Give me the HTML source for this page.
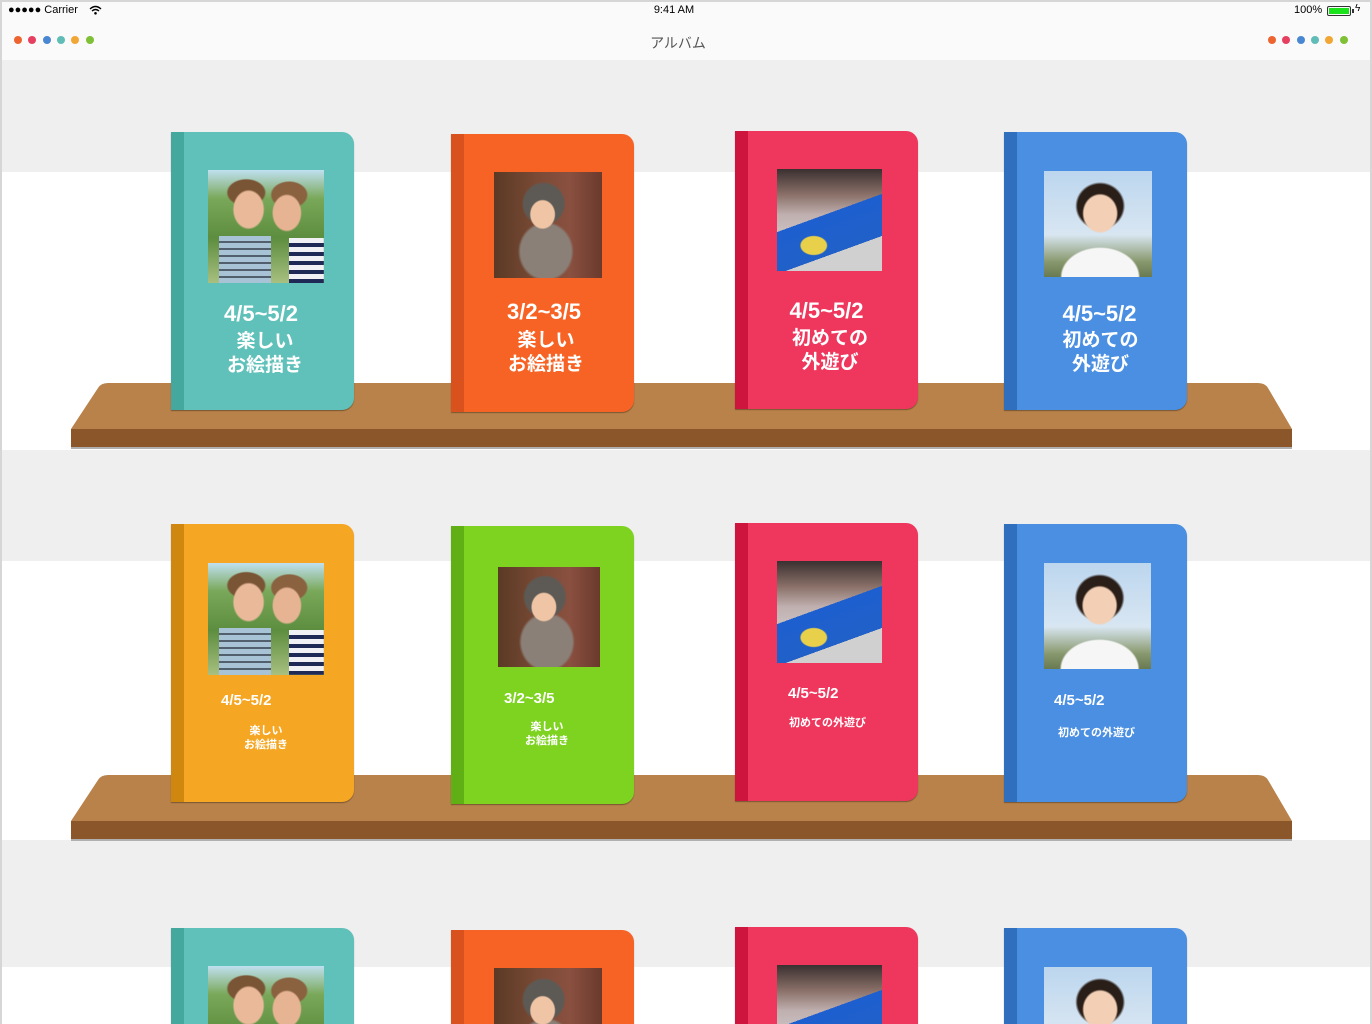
<!DOCTYPE html>
<html style="width:1372px;height:1024px;overflow:hidden"><head><meta charset="utf-8">
<style>
*{margin:0;padding:0;box-sizing:border-box}
html,body{width:1372px;height:1024px;overflow:hidden}
body{position:relative;background:#fff;font-family:"Liberation Sans","Noto Sans CJK JP",sans-serif}
.abs{position:absolute}
.frame{position:absolute;left:0;top:0;width:1372px;height:1024px;border:2px solid #d6d6d6;border-bottom:none;pointer-events:none;z-index:50}
.stripe{position:absolute;left:0;width:1372px;background:#efefef}
.book{position:absolute;width:183px;height:278px;border-radius:0 12px 12px 0;box-shadow:0 1px 1px rgba(0,0,0,.35);overflow:hidden;color:#fff;z-index:5}
.book .sp{position:absolute;left:0;top:0;width:13px;height:100%}
.ph{position:absolute}
.t{position:absolute;font-weight:bold;white-space:nowrap}
.teal{background:#60c1ba}.teal .sp{background:#45a89f}
.org{background:#f76325}.org .sp{background:#d9511c}
.red{background:#ef375d}.red .sp{background:#cd153d}
.blue{background:#4a8fe2}.blue .sp{background:#2f6fbd}
.yel{background:#f5a623}.yel .sp{background:#cf8710}
.grn{background:#7ed321}.grn .sp{background:#60b015}
.p1{background:
 radial-gradient(ellipse 16px 20px at 35% 35%,#e9b99a 90%,transparent 100%),
 radial-gradient(ellipse 15px 19px at 68% 38%,#e6b393 90%,transparent 100%),
 radial-gradient(ellipse 20px 14px at 33% 20%,#7a5535 90%,transparent 100%),
 radial-gradient(ellipse 19px 14px at 70% 22%,#8a6240 90%,transparent 100%),
 repeating-linear-gradient(180deg,#a8c3d6 0 5px,#52606e 5px 7px) 18% 100%/45% 42% no-repeat,
 repeating-linear-gradient(180deg,#f0f0f5 0 5px,#1e2a55 5px 9px) 100% 100%/30% 40% no-repeat,
 linear-gradient(180deg,#bfe0f0 0,#7aa85a 25%,#5d8d3e 60%,#a8c080 100%)}
.p2{background:
 radial-gradient(ellipse 13px 15px at 45% 40%,#f0c5a5 90%,transparent 100%),
 radial-gradient(ellipse 22px 22px at 46% 30%,#5d5a55 90%,transparent 100%),
 radial-gradient(ellipse 28px 30px at 48% 75%,#8a8078 90%,transparent 100%),
 linear-gradient(90deg,#5a3a25 0,#7a4a35 40%,#8a5040 70%,#6a3a2c 100%)}
.p3{background:
 radial-gradient(ellipse 14px 10px at 35% 75%,#e8d04a 90%,transparent 100%),
 linear-gradient(160deg,transparent 45%,#1e5fd0 45%,#2060c8 75%,#d0d0d0 75%),
 linear-gradient(180deg,#3a3030 0,#8a7068 25%,#c0b0b0 45%,#e0e0e0 100%)}
.p4{background:
 radial-gradient(ellipse 18px 20px at 52% 40%,#f2cfb5 90%,transparent 100%),
 radial-gradient(ellipse 25px 24px at 52% 33%,#2a1e18 90%,transparent 100%),
 radial-gradient(ellipse 40px 30px at 52% 100%,#f6f6f6 95%,transparent 100%),
 linear-gradient(180deg,#bcd6ee 0,#d8e6f2 60%,#8a9a70 85%,#6a7a50 100%)}
.clip{position:absolute;overflow:hidden}
.dot{position:absolute;width:8px;height:8px;border-radius:50%;top:36px}
</style></head><body>
<div class="frame"></div>
<div class="abs" style="left:0;top:0;width:1372px;height:60px;background:#fafafa"></div>
<div class="abs" style="left:8px;top:4px;font-size:11px;color:#000">●●●●● Carrier</div>
<svg class="abs" style="left:89px;top:5px" width="13" height="10" viewBox="0 0 13 10"><path d="M1 4 Q6.5 -1 12 4 M3 6 Q6.5 3 10 6" stroke="#000" stroke-width="1.4" fill="none"/><circle cx="6.5" cy="8.3" r="1.3"/></svg>
<div class="abs" style="left:0;width:1348px;top:4px;text-align:center;font-size:11px">9:41 AM</div>
<div class="abs" style="left:1294px;top:4px;font-size:11px">100%</div>
<div class="abs" style="left:1327px;top:6px;width:24px;height:10px;border:1px solid #333;border-radius:2px;padding:1px"><div style="width:100%;height:100%;background:#1be31b"></div></div>
<div class="abs" style="left:1352px;top:9px;width:2px;height:4px;background:#333"></div>
<div class="abs" style="left:1355px;top:3px;font-size:10px">ϟ</div>
<div class="abs" style="left:0;width:1356px;top:33px;text-align:center;font-size:14px;color:#555">アルバム</div>
<div class="dot" style="left:14px;background:#ee6430"></div><div class="dot" style="left:28px;background:#e73f5f"></div><div class="dot" style="left:43px;background:#4a87d3"></div><div class="dot" style="left:57px;background:#5fbcb6"></div><div class="dot" style="left:71px;background:#f2a634"></div><div class="dot" style="left:86px;background:#7fc035"></div>
<div class="dot" style="left:1268px;background:#ee6430"></div><div class="dot" style="left:1282px;background:#e73f5f"></div><div class="dot" style="left:1297px;background:#4a87d3"></div><div class="dot" style="left:1311px;background:#5fbcb6"></div><div class="dot" style="left:1325px;background:#f2a634"></div><div class="dot" style="left:1340px;background:#7fc035"></div>
<div class="stripe" style="top:60px;height:112px"></div>
<div class="stripe" style="top:450px;height:111px"></div>
<div class="stripe" style="top:840px;height:127px"></div>
<svg class="abs" style="left:0;top:370px;z-index:2" width="1372" height="90"><path d="M71 59 L98 18 Q101 13 108 13 L1258 13 Q1265 13 1268 18 L1292 59 Z" fill="#b8824a"/><rect x="71" y="59" width="1221" height="18" fill="#8b572a"/><rect x="71" y="77" width="1221" height="2" fill="#b0b0b0"/></svg>
<svg class="abs" style="left:0;top:762px;z-index:2" width="1372" height="90"><path d="M71 59 L98 18 Q101 13 108 13 L1258 13 Q1265 13 1268 18 L1292 59 Z" fill="#b8824a"/><rect x="71" y="59" width="1221" height="18" fill="#8b572a"/><rect x="71" y="77" width="1221" height="2" fill="#b0b0b0"/></svg>

<div class="book teal" style="left:171px;top:132px"><div class="sp"></div><div class="ph p1" style="left:37px;top:38px;width:116px;height:113px"></div>
<div class="t" style="left:0;width:180px;text-align:center;top:169px;font-size:22px">4/5~5/2</div>
<div class="t" style="left:0;width:188px;text-align:center;top:198px;font-size:19px;line-height:24px">楽しい<br>お絵描き</div></div>
<div class="book org" style="left:451px;top:134px"><div class="sp"></div><div class="ph p2" style="left:43px;top:38px;width:108px;height:106px"></div>
<div class="t" style="left:0;width:186px;text-align:center;top:165px;font-size:22px">3/2~3/5</div>
<div class="t" style="left:0;width:190px;text-align:center;top:195px;font-size:19px;line-height:24px">楽しい<br>お絵描き</div></div>
<div class="book red" style="left:735px;top:131px"><div class="sp"></div><div class="ph p3" style="left:42px;top:38px;width:105px;height:102px"></div>
<div class="t" style="left:0;width:183px;text-align:center;top:167px;font-size:22px">4/5~5/2</div>
<div class="t" style="left:0;width:190px;text-align:center;top:196px;font-size:19px;line-height:24px">初めての<br>外遊び</div></div>
<div class="book blue" style="left:1004px;top:132px"><div class="sp"></div><div class="ph p4" style="left:40px;top:39px;width:108px;height:106px"></div>
<div class="t" style="left:0;width:191px;text-align:center;top:169px;font-size:22px">4/5~5/2</div>
<div class="t" style="left:0;width:193px;text-align:center;top:197px;font-size:19px;line-height:24px">初めての<br>外遊び</div></div>

<div class="book yel" style="left:171px;top:524px"><div class="sp"></div><div class="ph p1" style="left:37px;top:39px;width:116px;height:112px"></div>
<div class="t" style="left:50px;top:168px;font-size:15px">4/5~5/2</div>
<div class="t" style="left:13px;width:164px;text-align:center;top:200px;font-size:11px;line-height:14px">楽しい<br>お絵描き</div></div>
<div class="book grn" style="left:451px;top:526px"><div class="sp"></div><div class="ph p2" style="left:47px;top:41px;width:102px;height:100px"></div>
<div class="t" style="left:53px;top:164px;font-size:15px">3/2~3/5</div>
<div class="t" style="left:13px;width:166px;text-align:center;top:194px;font-size:11px;line-height:14px">楽しい<br>お絵描き</div></div>
<div class="book red" style="left:735px;top:523px"><div class="sp"></div><div class="ph p3" style="left:42px;top:38px;width:105px;height:102px"></div>
<div class="t" style="left:53px;top:162px;font-size:15px">4/5~5/2</div>
<div class="t" style="left:54px;top:191px;font-size:11px">初めての外遊び</div></div>
<div class="book blue" style="left:1004px;top:524px"><div class="sp"></div><div class="ph p4" style="left:40px;top:39px;width:107px;height:106px"></div>
<div class="t" style="left:50px;top:168px;font-size:15px">4/5~5/2</div>
<div class="t" style="left:54px;top:200px;font-size:11px">初めての外遊び</div></div>

<div class="book teal" style="left:171px;top:928px;height:96px;border-radius:0 12px 0 0"><div class="sp"></div><div class="clip" style="left:37px;top:38px;width:116px;height:58px"><div class="ph p1" style="left:0;top:0;width:116px;height:113px"></div></div></div>
<div class="book org" style="left:451px;top:930px;height:94px;border-radius:0 12px 0 0"><div class="sp"></div><div class="clip" style="left:43px;top:38px;width:108px;height:56px"><div class="ph p2" style="left:0;top:0;width:108px;height:106px"></div></div></div>
<div class="book red" style="left:735px;top:927px;height:97px;border-radius:0 12px 0 0"><div class="sp"></div><div class="clip" style="left:42px;top:38px;width:105px;height:59px"><div class="ph p3" style="left:0;top:0;width:105px;height:102px"></div></div></div>
<div class="book blue" style="left:1004px;top:928px;height:96px;border-radius:0 12px 0 0"><div class="sp"></div><div class="clip" style="left:40px;top:39px;width:108px;height:57px"><div class="ph p4" style="left:0;top:0;width:108px;height:106px"></div></div></div>
</body></html>
